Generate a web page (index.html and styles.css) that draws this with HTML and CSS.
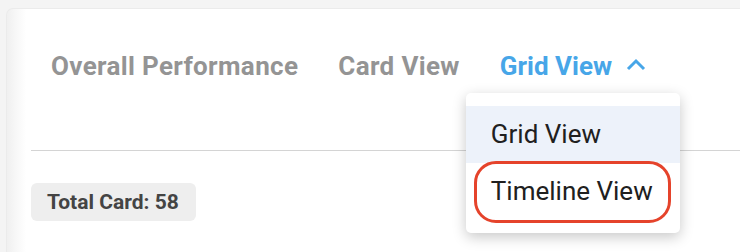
FILE: index.html
```html
<!DOCTYPE html>
<html>
<head>
<meta charset="utf-8">
<link rel="stylesheet" href="styles.css">
</head>
<body>
<div class="page">
  <div class="card">
    <div class="tabs">
      <div class="tab">Overall Performance</div>
      <div class="tab">Card View</div>
      <div class="tab tab-active">
        <span>Grid View</span>
        <svg class="chevron" width="20" height="13" viewBox="0 0 20 13"><polyline points="2,11 10,3 18,11" fill="none" stroke="#47a6e8" stroke-width="3"/></svg>
        <div class="menu">
          <div class="menu-item menu-item-hl">Grid View</div>
          <div class="menu-item">Timeline View<span class="mark"></span></div>
        </div>
      </div>
    </div>
    <div class="badge">Total Card: 58</div>
  </div>
</div>
</body>
</html>
```
FILE: styles.css
```css
html, body {
  margin: 0;
  padding: 0;
  background: #f4f4f4;
  font-family: Roboto, "Liberation Sans", sans-serif;
}
.page {
  width: 740px;
  height: 252px;
  overflow: hidden;
  padding: 8px 0 0 6px;
  box-sizing: border-box;
}
.card {
  width: 800px;
  height: 300px;
  background: linear-gradient(to right, #f0f0f0, #ffffff 19px);
  border-top: 1px solid #ebebeb;
  border-left: 1px solid #ebebeb;
  border-top-left-radius: 7px;
  padding-left: 24px;
  box-sizing: border-box;
}
.tabs {
  display: flex;
  align-items: center;
  padding-top: 42px;
  padding-bottom: 69px;
  border-bottom: 1px solid #d4d4d4;
}
.tab {
  position: relative;
  display: flex;
  align-items: center;
  padding: 0 20px;
  font-size: 26px;
  line-height: 30px;
  font-weight: 700;
  letter-spacing: 0.35px;
  color: #949494;
}
.tab-active {
  color: #47a6e8;
  letter-spacing: 0;
}
.chevron {
  margin-left: 14px;
  margin-top: -4px;
}
.menu {
  position: absolute;
  top: 42px;
  left: -14px;
  width: 214px;
  padding: 13px 0;
  background: #fff;
  border-radius: 5px;
  box-shadow: 0 4px 14px rgba(0, 0, 0, 0.22);
}
.menu-item {
  position: relative;
  height: 57px;
  line-height: 57px;
  padding-left: 25px;
  font-size: 26px;
  font-weight: 400;
  color: #202020;
  white-space: nowrap;
}
.menu-item-hl {
  background: #edf2fa;
}
.mark {
  position: absolute;
  left: 8px;
  right: 9px;
  top: -2px;
  bottom: -3px;
  border: 3px solid #e5432b;
  border-radius: 22px;
}
.badge {
  display: inline-block;
  margin-top: 32px;
  padding: 7px 17px 7px 16px;
  font-size: 21px;
  line-height: 24px;
  font-weight: 700;
  color: #444;
  background: #eeeeee;
  border-radius: 6px;
}
```
